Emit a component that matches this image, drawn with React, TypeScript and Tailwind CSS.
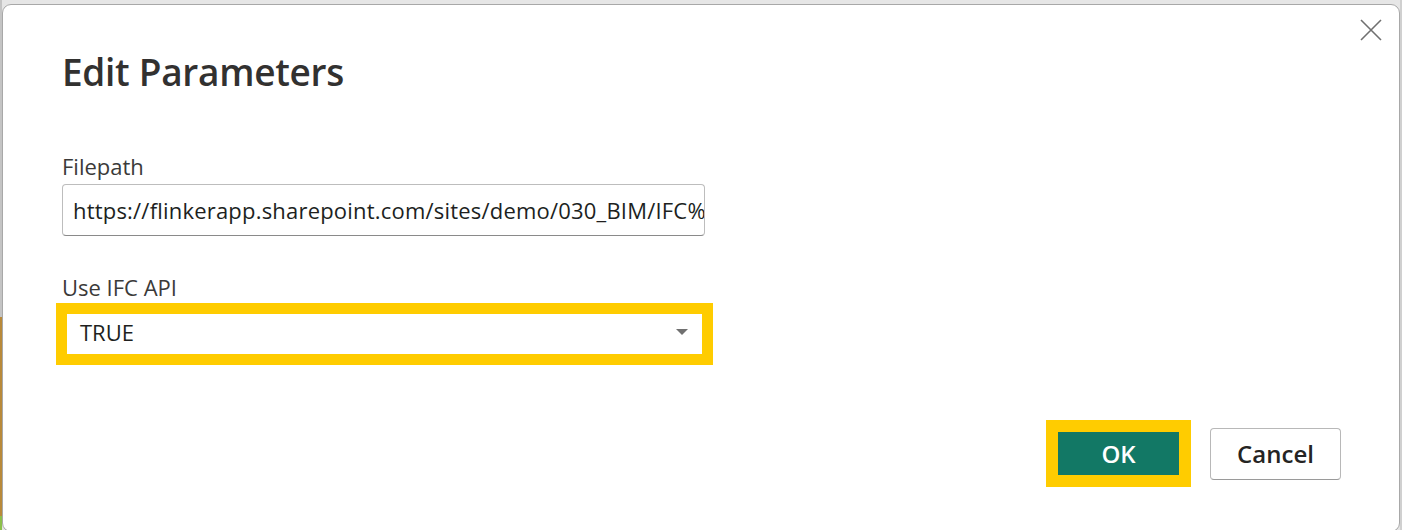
const font = { fontFamily: '"Open Sans", "Noto Sans", sans-serif' };

function CloseIcon() {
  return (
    <svg width="22" height="22" viewBox="0 0 22 22" fill="none" stroke="#707070" strokeWidth="1.6">
      <path d="M1 1 L21 21 M21 1 L1 21" />
    </svg>
  );
}

function Caret() {
  return (
    <svg width="12" height="7" viewBox="0 0 12 7">
      <path d="M0 0 H12 L6 6 Z" fill="#707070" />
    </svg>
  );
}

export default function App() {
  return (
    <div className="w-[1402px] h-[530px] overflow-hidden bg-[#e6e6e6] flex" style={font}>
      {/* strip of the window behind, left side */}
      <div className="w-[2px] flex flex-col">
        <div className="h-[317px] bg-[#c4c4c4]" />
        <div className="flex-1 bg-[#b8893a]" />
        <div className="h-[14px] bg-[#8cbf4a]" />
      </div>

      <div className="flex-1 pt-[4px] flex flex-col">
        <div className="flex-1 bg-white border border-[#a8a8a8] rounded-[9px] -mb-[2px] flex flex-col pl-[59px] pr-[60px]">
          <div className="flex justify-between items-start">
            <h1 className="mt-[43px] text-[37px] font-semibold text-[#323130] leading-[48px] tracking-[-0.3px]">
              Edit Parameters
            </h1>
            <button className="mt-[12px] -mr-[45px] p-[2px]">
              <CloseIcon />
            </button>
          </div>

          <label className="mt-[55px] text-[22px] text-[#3b3a39] leading-[30px]">Filepath</label>
          <div className="mt-[3px] w-[643px] h-[52px] border border-[#bdbdbd] border-b-[#8a8a8a] rounded-[4px] flex items-center pl-[10px] overflow-hidden">
            <span className="text-[22px] text-[#201f1e] whitespace-nowrap tracking-[0.2px]">
              https://flinkerapp.sharepoint.com/sites/demo/030_BIM/IFC%20
            </span>
          </div>

          <label className="mt-[36px] text-[22px] text-[#3b3a39] leading-[30px]">Use IFC API</label>
          <div className="mt-[1px] -ml-[6px] w-[657px] h-[62px] bg-[#ffcc00] p-[11px]">
            <div className="h-full bg-white flex items-center justify-between pl-[13px] pr-[14px] pb-[3px]">
              <span className="text-[22px] text-[#201f1e]">TRUE</span>
              <Caret />
            </div>
          </div>

          <div className="mt-[55px] flex justify-end gap-[19px] -mr-[2px]">
            <div className="bg-[#ffcc00] p-[12px]">
              <button className="w-[121px] h-[43px] bg-[#127865] text-white text-[24px] font-semibold">OK</button>
            </div>
            <button className="mt-[8px] w-[131px] h-[52px] bg-white border border-[#b8b8b8] border-b-[#9a9a9a] rounded-[4px] text-[24px] font-semibold text-[#252423]">
              Cancel
            </button>
          </div>
        </div>
      </div>
      <div className="w-[2px] bg-[#d0d0d0]" />
    </div>
  );
}
